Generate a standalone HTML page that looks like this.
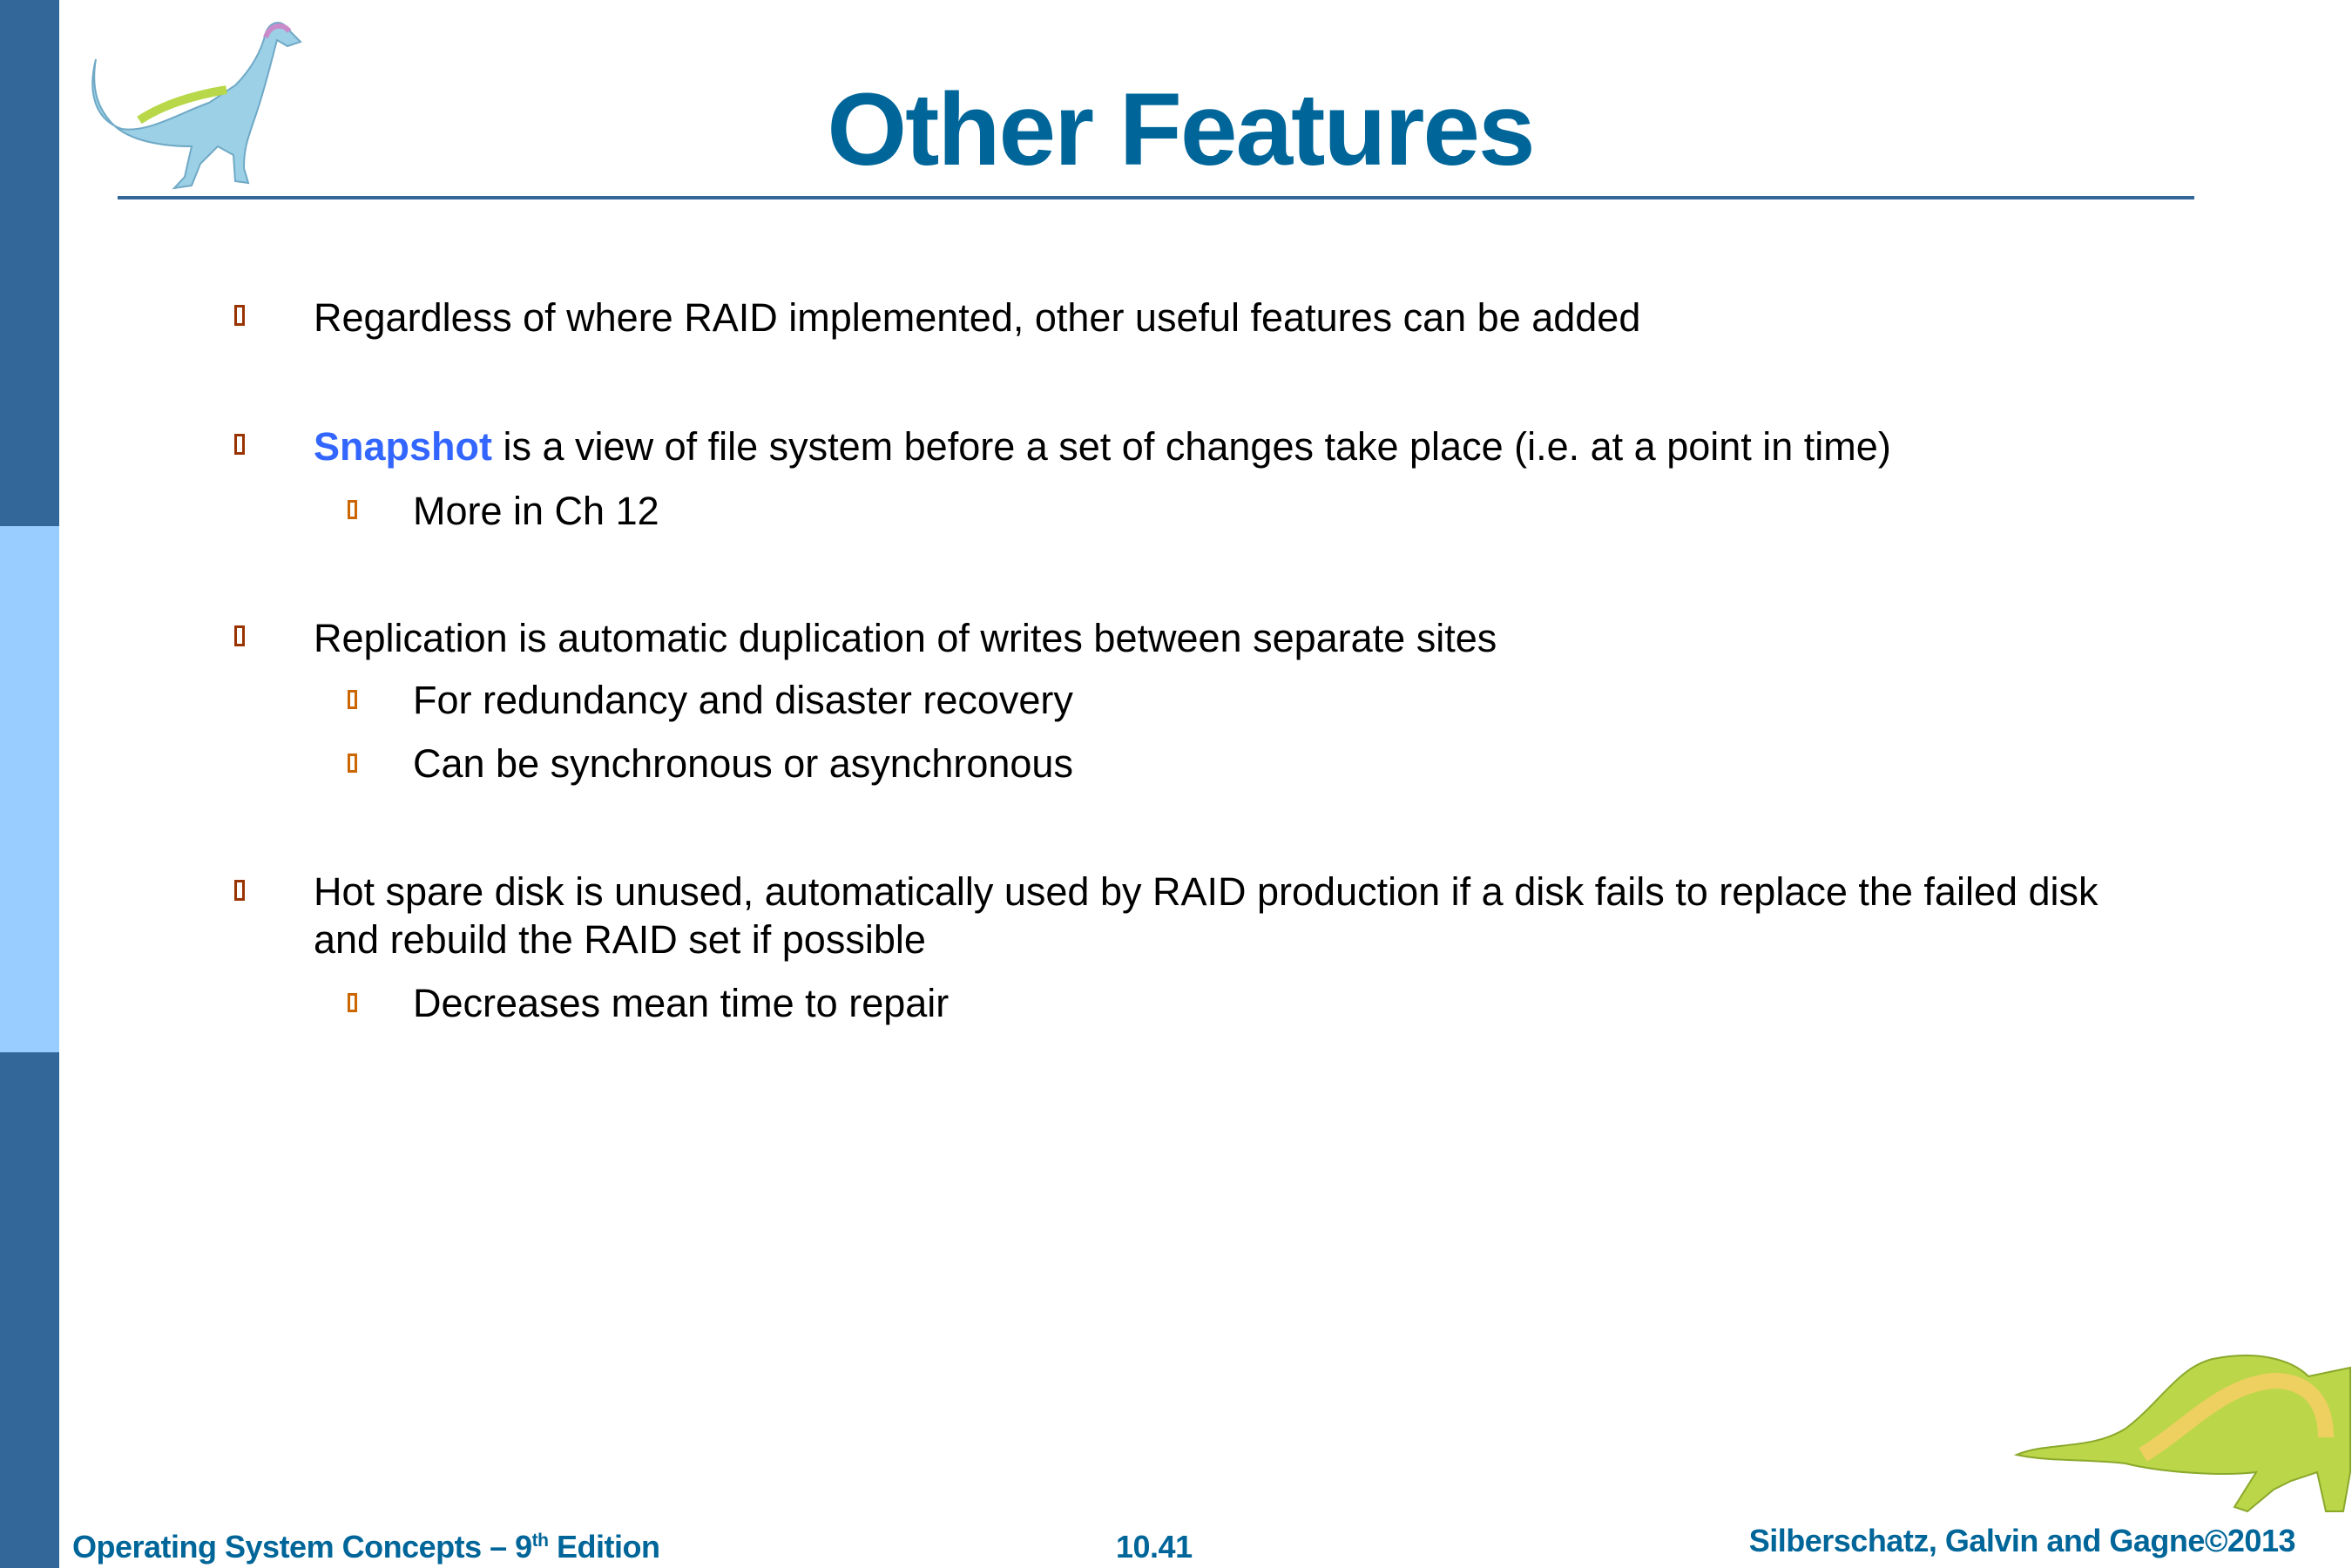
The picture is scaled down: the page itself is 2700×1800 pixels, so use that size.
<!DOCTYPE html>
<html><head><meta charset="utf-8"><style>
body{margin:0;width:2700px;height:1800px;position:relative;background:#fff;font-family:"Liberation Sans",Arial,sans-serif;overflow:hidden}
.bar{position:absolute;left:0;width:68px}
.t{position:absolute;white-space:nowrap;font-size:45px;color:#000;line-height:1}
.b{position:absolute;border:3px solid #993300;width:12px;height:24px;box-sizing:border-box}
.s{position:absolute;border:3px solid #cc6600;width:11px;height:22px;box-sizing:border-box}
.f{position:absolute;font-weight:bold;color:#006699;font-size:36px;white-space:nowrap;line-height:1;letter-spacing:-0.5px}
</style></head><body>
<div class="bar" style="top:0;height:604px;background:#336699"></div>
<div class="bar" style="top:604px;height:604px;background:#99ccff"></div>
<div class="bar" style="top:1208px;height:592px;background:#336699"></div>

<svg style="position:absolute;left:100px;top:18px" width="310" height="205" viewBox="0 0 310 205">
<path d="M10 50 C0 90,10 120,40 130 C70 135,110 110,140 100 L170 80 C190 60,200 40,205 20 C210 5,225 5,230 15 L245 30 L230 35 L218 28 C212 50,205 80,195 110 C185 140,180 150,180 175 L185 192 L170 190 L168 160 L150 150 L130 170 L120 195 L100 198 L112 185 L120 150 C90 150,50 145,30 125 C10 105,5 80,10 50Z" fill="#9cd0e6" stroke="#6fa9c6" stroke-width="2"/>
<path d="M60 120 C90 100,130 90,160 85" stroke="#b8d84a" stroke-width="10" fill="none"/>
<path d="M205 25 C210 10,225 8,232 18" stroke="#c98bc9" stroke-width="6" fill="none"/>
</svg>

<svg style="position:absolute;left:2310px;top:1550px" width="390" height="195" viewBox="0 0 390 195">
<path d="M5 120 C40 105,90 115,130 90 C170 60,190 20,230 10 C280 0,320 10,340 30 L388 20 L388 140 L380 185 L360 185 L350 140 L320 150 L300 160 L270 185 L255 180 L280 140 C240 145,170 140,130 130 C90 125,40 128,5 120Z" fill="#bcd64a" stroke="#8aa82a" stroke-width="2"/>
<path d="M150 120 C200 90,240 40,300 35 C340 35,360 60,360 100" stroke="#eed060" stroke-width="18" fill="none"/>
</svg>

<div style="position:absolute;left:0;width:2710px;top:90px;text-align:center;font-weight:bold;font-size:118px;color:#006699;line-height:1;letter-spacing:-2px">Other Features</div>
<div style="position:absolute;left:135px;top:225px;width:2384px;height:4px;background:#336699"></div>

<div class="b" style="left:269px;top:350px"></div>
<div class="t" style="left:360px;top:342px">Regardless of where RAID implemented, other useful features can be added</div>
<div class="b" style="left:269px;top:498px"></div>
<div class="t" style="left:360px;top:490px"><b style="color:#3366ff">Snapshot</b> is a view of file system before a set of changes take place (i.e. at a point in time)</div>
<div class="s" style="left:399px;top:574px"></div>
<div class="t" style="left:474px;top:564px">More in Ch 12</div>
<div class="b" style="left:269px;top:718px"></div>
<div class="t" style="left:360px;top:710px">Replication is automatic duplication of writes between separate sites</div>
<div class="s" style="left:399px;top:792px"></div>
<div class="t" style="left:474px;top:781px">For redundancy and disaster recovery</div>
<div class="s" style="left:399px;top:865px"></div>
<div class="t" style="left:474px;top:854px">Can be synchronous or asynchronous</div>
<div class="b" style="left:269px;top:1010px"></div>
<div class="t" style="left:360px;top:1001px">Hot spare disk is unused, automatically used by RAID production if a disk fails to replace the failed disk</div>
<div class="t" style="left:360px;top:1056px">and rebuild the RAID set if possible</div>
<div class="s" style="left:399px;top:1140px"></div>
<div class="t" style="left:474px;top:1129px">Decreases mean time to repair</div>

<div class="f" style="left:83px;top:1758px">Operating System Concepts – 9<sup style="font-size:21px">th</sup> Edition</div>
<div class="f" style="left:1281px;top:1758px">10.41</div>
<div class="f" style="right:65px;top:1751px">Silberschatz, Galvin and Gagne©2013</div>
</body></html>
